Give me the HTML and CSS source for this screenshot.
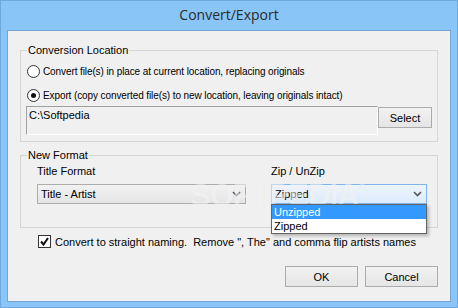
FILE: index.html
```html
<!DOCTYPE html>
<html lang="en">
<head>
    <meta charset="UTF-8">
    <title>Convert/Export</title>
    <link rel="stylesheet" href="styles.css">
</head>
<body>
    <div class="window">
        <div class="titlebar">Convert/Export</div>
        <div class="client">
            <fieldset class="group group-location">
                <legend>Conversion Location</legend>
                <label class="option first">
                    <span class="radio"></span>
                    Convert file(s) in place at current location, replacing originals
                </label>
                <label class="option">
                    <span class="radio checked"></span>
                    Export (copy converted file(s) to new location, leaving originals intact)
                </label>
                <div class="path-row">
                    <div class="textbox">C:\Softpedia</div>
                    <button class="btn btn-select">Select</button>
                </div>
            </fieldset>

            <fieldset class="group group-format">
                <legend>New Format</legend>
                <div class="format-cols">
                    <div class="field field-title">
                        <div class="field-label">Title Format</div>
                        <div class="combo">
                            <span>Title - Artist</span>
                            <svg class="chevron" width="9" height="6" viewBox="0 0 9 6"><polyline points="1,1 4.5,4.5 8,1" fill="none" stroke="#555" stroke-width="1.6"/></svg>
                        </div>
                    </div>
                    <div class="field field-zip">
                        <div class="field-label">Zip / UnZip</div>
                        <div class="combo combo-open">
                            <span>Zipped</span>
                            <svg class="chevron" width="9" height="6" viewBox="0 0 9 6"><polyline points="1,1 4.5,4.5 8,1" fill="none" stroke="#555" stroke-width="1.6"/></svg>
                        </div>
                        <ul class="dropdown">
                            <li class="selected">Unzipped</li>
                            <li>Zipped</li>
                        </ul>
                    </div>
                </div>
            </fieldset>

            <label class="check-row">
                <span class="checkbox">
                    <svg width="11" height="11" viewBox="0 0 11 11"><polyline points="2,5.5 4.5,8.5 9,2" fill="none" stroke="#111" stroke-width="2"/></svg>
                </span>
                Convert to straight naming.&nbsp; Remove ", The" and comma flip artists names
            </label>

            <div class="actions">
                <button class="btn">OK</button>
                <button class="btn">Cancel</button>
            </div>

            <div class="watermark">SOFTPEDIA<sup>&reg;</sup></div>
        </div>
    </div>
</body>
</html>
```

FILE: styles.css
```css
body {
    margin: 0;
    font-family: "Liberation Sans", Arial, sans-serif;
    font-size: 11px;
    color: #000;
}
.window {
    width: 458px;
    height: 308px;
    box-sizing: border-box;
    background-color: #89c5f7;
    border: 1px solid #6fa8dc;
    display: flex;
    flex-direction: column;
}
.titlebar {
    height: 29px;
    line-height: 28px;
    text-align: center;
    font-family: "Open Sans", "Liberation Sans", sans-serif;
    font-size: 14px;
    color: #2b2b2b;
}
.client {
    position: relative;
    margin: 0 6px;
    height: 272px;
    box-sizing: border-box;
    border: 1px solid #72a4d6;
    background-color: #f0f0f0;
    padding: 13px 12px 0 12px;
}
.group {
    margin: 0;
    border: 1px solid #d5d5d5;
    padding: 0 5px 6px 5px;
}
.group legend {
    margin-left: 1px;
    padding: 0 1px;
    line-height: 13px;
}
.option {
    display: flex;
    align-items: center;
    height: 24px;
    white-space: nowrap;
    font-size: 10px;
    letter-spacing: -0.1px;
}
.option.first {
    margin-top: 2px;
}
.radio {
    width: 13px;
    height: 13px;
    box-sizing: border-box;
    margin: 0 3px 0 1px;
    border: 1px solid #333;
    border-radius: 50%;
    background-color: #fff;
    display: flex;
    align-items: center;
    justify-content: center;
}
.radio.checked::after {
    content: "";
    width: 5px;
    height: 5px;
    border-radius: 50%;
    background-color: #111;
}
.path-row {
    display: flex;
    align-items: flex-start;
    margin-top: -1px;
}
.textbox {
    flex: 1;
    height: 29px;
    box-sizing: border-box;
    border-top: 1px solid #a0a0a0;
    border-left: 1px solid #a0a0a0;
    border-right: 1px solid #fff;
    border-bottom: 1px solid #fff;
    padding: 2px 2px;
}
.btn {
    height: 21px;
    box-sizing: border-box;
    border: 1px solid #acacac;
    background: linear-gradient(#f2f2f2, #e5e5e5);
    font-family: "Liberation Sans", Arial, sans-serif;
    font-size: 11px;
    color: #000;
    padding: 0;
}
.btn-select {
    width: 54px;
    margin-top: 1px;
}
.group-format {
    margin-top: 7px;
    padding-bottom: 23px;
}
.format-cols {
    display: flex;
    gap: 25px;
    margin-left: 11px;
}
.field {
    position: relative;
}
.field-title {
    width: 209px;
}
.field-zip {
    width: 156px;
}
.field-label {
    margin-top: 3px;
    line-height: 13px;
}
.combo {
    margin-top: 6px;
    height: 20px;
    box-sizing: border-box;
    border: 1px solid #acacac;
    background: linear-gradient(#f2f2f2, #e5e5e5);
    display: flex;
    align-items: center;
    justify-content: space-between;
    padding: 0 4px 0 3px;
}
.combo-open {
    border-color: #7eb4ea;
    background: linear-gradient(#ecf4fc, #dcecfc);
}
.dropdown {
    position: absolute;
    left: 0;
    top: 42px;
    width: 156px;
    box-sizing: border-box;
    margin: 0;
    padding: 0;
    list-style: none;
    border: 1px solid #646464;
    background-color: #fff;
    box-shadow: 2px 2px 3px rgba(0, 0, 0, 0.25);
    z-index: 2;
}
.dropdown li {
    height: 14px;
    line-height: 14px;
    padding-left: 2px;
}
.dropdown li.selected {
    background-color: #3399ff;
    color: #fff;
}
.check-row {
    display: flex;
    align-items: center;
    margin: 7px 0 0 18px;
    height: 13px;
    white-space: nowrap;
}
.checkbox {
    width: 13px;
    height: 13px;
    box-sizing: border-box;
    border: 1px solid #333;
    background-color: #fff;
    margin-right: 4px;
    display: flex;
}
.actions {
    display: flex;
    justify-content: flex-end;
    gap: 7px;
    margin-top: 18px;
}
.actions .btn {
    width: 73px;
}
.watermark {
    position: absolute;
    left: 182px;
    top: 147px;
    font-family: "Liberation Sans", Arial, sans-serif;
    font-weight: bold;
    font-size: 31px;
    letter-spacing: -1px;
    color: rgba(255, 255, 255, 0.55);
    text-shadow: 0 0 1px rgba(0, 0, 0, 0.06);
    pointer-events: none;
    z-index: 1;
}
.watermark sup {
    font-size: 9px;
    vertical-align: 16px;
}
```
